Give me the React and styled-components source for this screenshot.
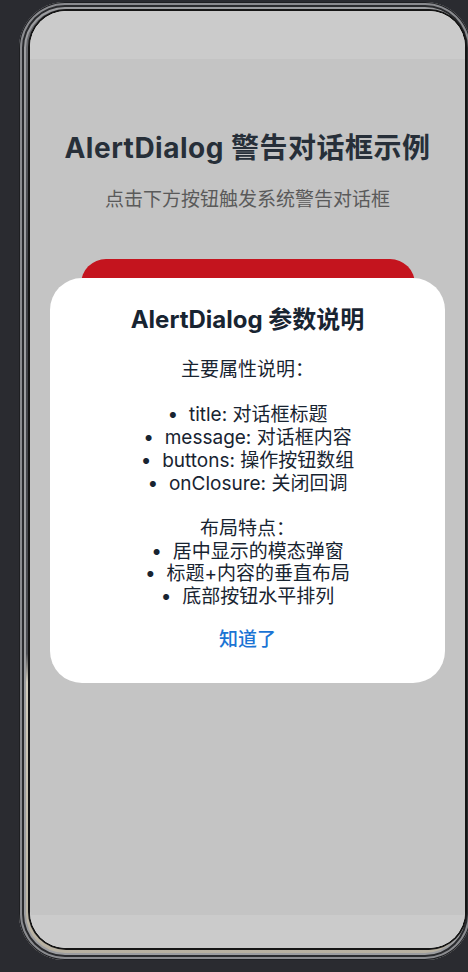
import React from 'react';
import styled, { createGlobalStyle } from 'styled-components';

const Global = createGlobalStyle`
  html, body {
    margin: 0;
    padding: 0;
    width: 468px;
    height: 972px;
    overflow: hidden;
    background: #2a2b30;
  }
  * { box-sizing: border-box; }
`;

const S = {};

S.Frame = styled.div`
  margin: 2px 0 0 19px;
  width: 452px;
  height: 958px;
  padding: 9px 6px 12px 11px;
  border-radius: 46px;
  background: linear-gradient(180deg, #6b6c70 0%, #3e3f44 30%, #4c4d52 68%, #d2cbbb 71%, #b7b0a0 100%);
  box-shadow:
    inset 0 0 0 1px #1e1f22,
    inset 0 0 0 3px #8a8b8f,
    inset 0 0 0 5px #2a2b2e,
    inset 0 0 0 7px #9c9da0;
`;

S.Screen = styled.div`
  position: relative;
  height: 100%;
  border-radius: 36px;
  overflow: hidden;
  display: flex;
  flex-direction: column;
  background: #fff;
  box-shadow: 0 0 0 2px #151515;
`;

S.SystemBar = styled.div`
  flex: 0 0 ${p => p.h}px;
  background: #cbcbcb;
`;

S.Content = styled.main`
  position: relative;
  flex: 1;
  display: flex;
  flex-direction: column;
  align-items: center;
  padding-top: 69px;
  background: #fff;
  font-family: Inter, "Noto Sans CJK SC", sans-serif;
`;

S.Title = styled.h1`
  margin: 0;
  font-size: 28px;
  line-height: 40px;
  font-weight: 700;
  color: #333e4b;
  letter-spacing: 0.5px;
`;

S.Subtitle = styled.p`
  margin: 19px 0 0;
  font-size: 19px;
  line-height: 26px;
  color: #767676;
`;

S.TriggerButton = styled.button`
  margin-top: 46px;
  width: 334px;
  height: 50px;
  border: none;
  border-radius: 25px;
  background: #ff1a27;
`;

S.Backdrop = styled.div`
  position: absolute;
  inset: 0;
  display: flex;
  align-items: center;
  justify-content: center;
  padding-bottom: 13px;
  background: rgba(0, 0, 0, 0.23);
`;

S.Dialog = styled.div`
  width: 395px;
  height: 405px;
  border-radius: 32px;
  background: #fff;
  padding: 26px 24px 26px;
  display: flex;
  flex-direction: column;
  align-items: center;
`;

S.DialogTitle = styled.h2`
  margin: 0;
  font-size: 24px;
  line-height: 32px;
  font-weight: 700;
  color: #182431;
`;

S.Message = styled.p`
  margin: 23px 0 0;
  white-space: pre-wrap;
  text-align: center;
  font-size: 19px;
  line-height: 22.7px;
  color: #182431;
`;

S.Action = styled.button`
  margin-top: 10px;
  height: 40px;
  padding: 0 20px;
  border: none;
  background: transparent;
  font-family: inherit;
  font-size: 19px;
  font-weight: 500;
  color: #1b74d4;
`;

const message = `主要属性说明：

•  title: 对话框标题
•  message: 对话框内容
•  buttons: 操作按钮数组
•  onClosure: 关闭回调

布局特点：
•  居中显示的模态弹窗
•  标题+内容的垂直布局
•  底部按钮水平排列`;

export default function App() {
  return (
    <>
      <Global />
      <S.Frame>
        <S.Screen>
          <S.SystemBar h={48} />
          <S.Content>
            <S.Title>AlertDialog 警告对话框示例</S.Title>
            <S.Subtitle>点击下方按钮触发系统警告对话框</S.Subtitle>
            <S.TriggerButton aria-label="显示警告对话框" />
            <S.Backdrop>
              <S.Dialog>
                <S.DialogTitle>AlertDialog 参数说明</S.DialogTitle>
                <S.Message>{message}</S.Message>
                <S.Action>知道了</S.Action>
              </S.Dialog>
            </S.Backdrop>
          </S.Content>
          <S.SystemBar h={33} />
        </S.Screen>
      </S.Frame>
    </>
  );
}
